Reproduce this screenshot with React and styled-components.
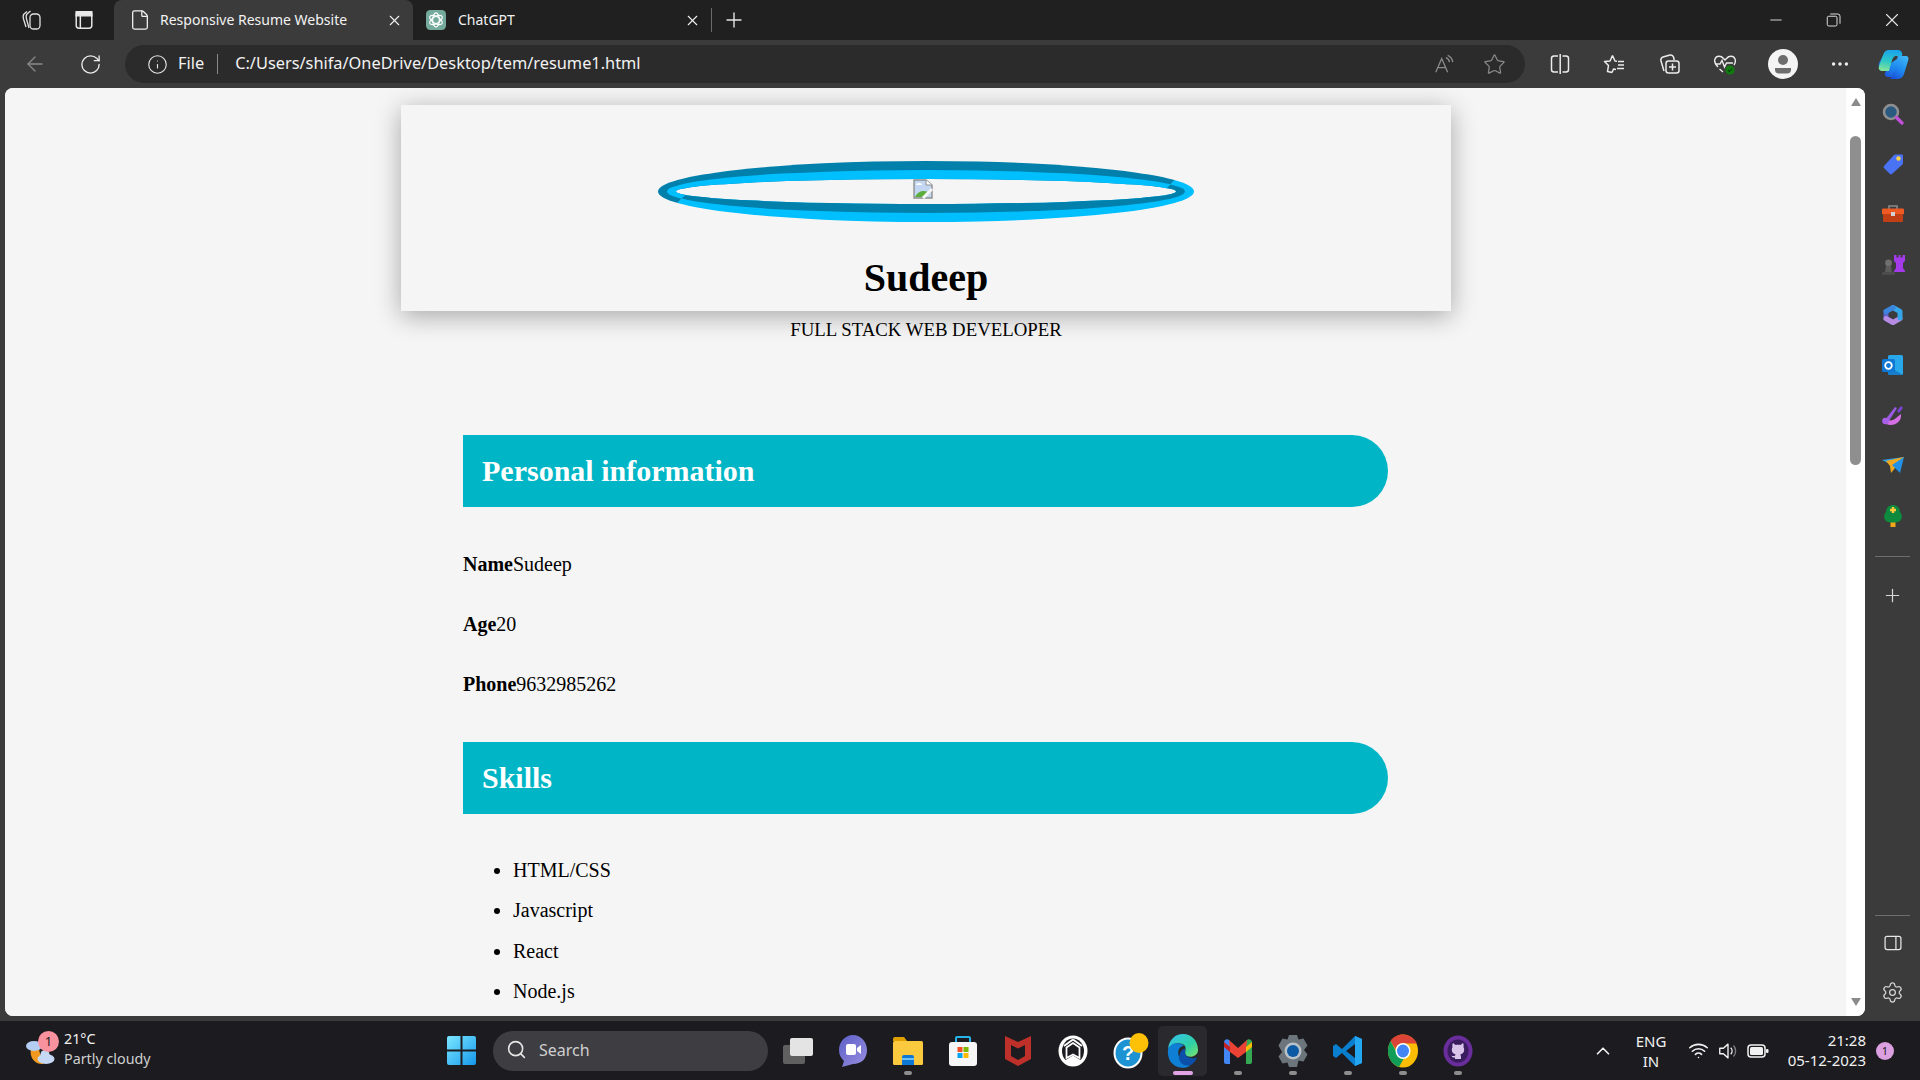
import React from 'react'
import styled, { createGlobalStyle } from 'styled-components'
import {
  ArrowLeft, RotateCw, Info, File, X, Plus, Star, Minus, Search, ChevronUp, Wifi, Settings, Ellipsis,
} from 'lucide-react'

const GlobalStyle = createGlobalStyle`
  html, body {
    margin: 0;
    width: 1920px;
    height: 1080px;
    overflow: hidden;
    background: #202020;
  }
`

const UI_FONT = `"Noto Sans", "Open Sans", sans-serif`
const PAGE_FONT = `"Liberation Serif", "Times New Roman", serif`

const Screen = styled.div`
  width: 1920px;
  height: 1080px;
  display: flex;
  flex-direction: column;
  font-family: ${UI_FONT};
  color: #fff;
`

/* ---- tab strip ---- */
const TabStrip = styled.div`
  height: 40px;
  flex: none;
  display: flex;
  align-items: stretch;
  background: #202020;
`
const StripButton = styled.div`
  width: ${p => p.$w || 52}px;
  flex: none;
  display: flex;
  align-items: center;
  justify-content: center;
  color: #e6e6e6;
`
const Tab = styled.div`
  width: ${p => p.$w}px;
  flex: none;
  display: flex;
  align-items: center;
  padding: 0 10px 0 ${p => p.$active ? 15 : 13}px;
  box-sizing: border-box;
  margin-left: ${p => p.$active ? 4 : 0}px;
  background: ${p => p.$active ? '#3b3b3b' : 'transparent'};
  border-radius: ${p => p.$active ? '8px 8px 0 0' : '0'};
  font-size: 14px;
  color: #f2f2f2;
`
const TabTitle = styled.span`
  margin: -2px 0 0 ${p => p.$gap}px;
  flex: 1;
  white-space: nowrap;
`
const TabDivider = styled.div`
  width: 1px;
  height: 24px;
  align-self: center;
  background: #6a6a6a;
  flex: none;
`
const WindowControls = styled.div`
  margin-left: auto;
  display: flex;
  gap: 1px;
`

/* ---- toolbar ---- */
const Toolbar = styled.div`
  height: 48px;
  flex: none;
  display: flex;
  align-items: center;
  background: #3b3b3b;
`
const ToolButton = styled.div`
  width: ${p => p.$w || 55}px;
  flex: none;
  display: flex;
  align-items: center;
  justify-content: center;
  color: ${p => p.$dim ? '#8a8a8a' : '#ececec'};
`
const AddressBar = styled.div`
  width: 1400px;
  height: 38px;
  flex: none;
  margin-left: 15px;
  margin-right: 7px;
  display: flex;
  align-items: center;
  background: #2b2b2b;
  border-radius: 19px;
  font-size: 16.35px;
  color: #f2f2f2;
`
const AddressIcon = styled.div`
  margin-left: 22px;
  display: flex;
  color: #e6e6e6;
`
const Scheme = styled.span`
  margin: -2px 0 0 10px;
`
const AddressDivider = styled.div`
  width: 1px;
  height: 20px;
  margin: 0 17px 0 13px;
  background: #8a8a8a;
`
const Url = styled.span`
  flex: 1;
  margin-top: -2px;
  white-space: nowrap;
`
const AddressEnd = styled.div`
  display: flex;
  align-items: center;
  padding-right: 6px;
`

/* ---- main area ---- */
const Main = styled.div`
  flex: 1;
  min-height: 0;
  display: flex;
  padding-left: 5px;
  background: #3b3b3b;
`
const BrowserWindow = styled.div`
  width: 1860px;
  height: 928px;
  flex: none;
  display: flex;
  overflow: hidden;
  border-radius: 8px;
  background: #f5f5f5;
`
const Page = styled.div`
  flex: 1;
  min-width: 0;
  padding-top: 17px;
  background: #f5f5f5;
  color: #000;
  font-family: ${PAGE_FONT};
  font-size: 20px;
  line-height: 22px;
`
const HeaderCard = styled.header`
  width: 1050px;
  height: 206px;
  margin-left: 396px;
  display: flex;
  flex-direction: column;
  align-items: center;
  background: #f5f5f5;
  box-shadow: 0 5px 24px rgba(0, 0, 0, 0.32);
`
const Avatar = styled.div`
  width: 536px;
  height: 61px;
  box-sizing: border-box;
  margin-top: 56px;
  display: flex;
  align-items: center;
  justify-content: center;
  border: 18px groove #00bfff;
  border-radius: 50%;
`
const BrokenImage = styled.svg`
  width: 20px;
  height: 20px;
  flex: none;
  margin: -5px 6px 0 0;
`
const Name = styled.h1`
  margin: 33px 0 0;
  font-size: 40px;
  line-height: 46px;
  font-weight: 700;
`
const Role = styled.p`
  width: 1050px;
  margin: 8px 0 0 396px;
  text-align: center;
  font-size: 18.8px;
`
const Section = styled.section`
  width: 925px;
  margin-left: 458px;
`
const SectionBar = styled.h2`
  height: 72px;
  margin: ${p => p.$top}px 0 0;
  padding-left: 19px;
  display: flex;
  align-items: center;
  background: #00b6c6;
  border-radius: 0 36px 36px 0;
  color: #fff;
  font-size: 30px;
  font-weight: 700;
`
const InfoRow = styled.p`
  margin: ${p => p.$first ? 46 : 38}px 0 0;
`
const SkillList = styled.ul`
  margin: 45px 0 0;
  padding-left: 50px;
`
const SkillItem = styled.li`
  margin-bottom: 18.3px;
`

/* ---- scrollbar and sidebar ---- */
const ScrollTrack = styled.div`
  width: 19px;
  flex: none;
  display: flex;
  flex-direction: column;
  align-items: center;
  background: #fff;
`
const ScrollArrow = styled.div`
  width: 0;
  height: 0;
  margin: ${p => p.$up ? '10px 0 0' : 'auto 0 10px'};
  border-left: 5.5px solid transparent;
  border-right: 5.5px solid transparent;
  border-bottom: ${p => p.$up ? '8px solid #8b8b8b' : '0'};
  border-top: ${p => p.$up ? '0' : '8px solid #8b8b8b'};
`
const ScrollThumb = styled.div`
  width: 11px;
  height: 329px;
  margin-top: 30px;
  border-radius: 5.5px;
  background: #8f8f8f;
`
const Sidebar = styled.aside`
  flex: 1;
  display: flex;
  flex-direction: column;
  align-items: center;
  height: 930px;
  padding-top: 1px;
  box-sizing: border-box;
  color: #d8d8d8;
`
const SideItem = styled.div`
  height: 50.2px;
  flex: none;
  display: flex;
  align-items: center;
  justify-content: center;
`
const SideRule = styled.div`
  width: 35px;
  height: 1px;
  flex: none;
  margin: ${p => p.$bottom ? 'auto 0 2px' : '15px 0 14px'};
  background: #6e6e6e;
`

/* ---- taskbar ---- */
const Taskbar = styled.footer`
  height: 59px;
  flex: none;
  display: flex;
  align-items: center;
  background: #1c1c20;
`
const Weather = styled.div`
  width: 447px;
  flex: none;
  box-sizing: border-box;
  padding-left: 25px;
  display: flex;
  align-items: center;
  position: relative;
`
const WeatherBadge = styled.span`
  position: absolute;
  left: 38px;
  top: -2px;
  width: 21px;
  height: 21px;
  border-radius: 50%;
  background: #f9929f;
  color: #1c1c1c;
  font-size: 13px;
  line-height: 21px;
  text-align: center;
`
const WeatherText = styled.div`
  margin: -4px 0 0 9px;
  font-size: 14.3px;
  line-height: 20px;
  color: #f0f0f0;
`
const WeatherSub = styled.div`
  color: #cfcfcf;
`
const SearchBox = styled.div`
  width: 275px;
  height: 40px;
  flex: none;
  margin-left: 17px;
  margin-right: 2px;
  box-sizing: border-box;
  padding: 0 0 2px 13px;
  display: flex;
  align-items: center;
  gap: 12px;
  background: #3e3e42;
  border-radius: 20px;
  font-size: 16px;
  color: #cfcfcf;
`
const AppSlot = styled.div`
  width: ${p => p.$active ? 49 : 55}px;
  height: 50px;
  margin: 0 ${p => p.$active ? 3 : 0}px;
  flex: none;
  position: relative;
  display: flex;
  align-items: center;
  justify-content: center;
  background: ${p => p.$active ? '#2a2a2e' : 'transparent'};
  border-radius: 5px;
`
const RunDot = styled.span`
  position: absolute;
  bottom: 1px;
  left: 50%;
  width: ${p => p.$active ? 20 : 8}px;
  height: 4px;
  margin-left: ${p => p.$active ? -10 : -4}px;
  border-radius: 2px;
  background: ${p => p.$active ? '#e1a5e6' : '#8d8d8d'};
`
const Tray = styled.div`
  margin-left: auto;
  padding-right: 26px;
  display: flex;
  align-items: center;
  font-size: 15px;
  color: #f2f2f2;
`
const TrayIcon = styled.div`
  width: ${p => p.$w || 30}px;
  flex: none;
  display: flex;
  justify-content: center;
  align-items: center;
`
const Lang = styled.div`
  width: 56px;
  margin-right: 4px;
  flex: none;
  text-align: center;
  line-height: 20px;
`
const Clock = styled.div`
  width: 93px;
  margin-top: -2px;
  flex: none;
  text-align: right;
  line-height: 20px;
`
const NoticeBadge = styled.span`
  width: 18px;
  height: 18px;
  margin-left: 10px;
  border-radius: 50%;
  background: #dc9fe0;
  color: #1c1c1c;
  font-size: 11px;
  line-height: 18px;
  text-align: center;
`

/* ---- drawn icons ---- */
const Svg = ({ s = 24, children, ...rest }) => (
  <svg width={s} height={s} viewBox="0 0 24 24" fill="none" {...rest}>{children}</svg>
)

const CollectionsTabs = () => (
  <Svg s={24} stroke="#e0e0e0" strokeWidth="1.3">
    <path d="M7 3.5 L4 6 C3 7 3 9 3.5 11 L6 19" />
    <path d="M10.5 3 L7 6 C6 7 6 9 6.5 11 L9 20" />
    <rect x="10" y="6" width="10" height="15" rx="3.5" />
  </Svg>
)
const VerticalTabs = () => (
  <Svg s={22} stroke="#e8e8e8" strokeWidth="1.6">
    <rect x="3.5" y="3" width="17" height="18" rx="3" />
    <path d="M3.5 3 h17 v4.5 h-17 z" fill="#e8e8e8" />
    <path d="M8 7.5 V21" />
  </Svg>
)
const GptIcon = () => (
  <Svg s={20}>
    <rect x="0" y="0" width="24" height="24" rx="5" fill="#74aa9c" />
    <g stroke="#fff" strokeWidth="1.4">
      <ellipse cx="12" cy="12" rx="4" ry="8.500" />
      <ellipse cx="12" cy="12" rx="4" ry="8.500" transform="rotate(60 12 12)" />
      <ellipse cx="12" cy="12" rx="4" ry="8.500" transform="rotate(120 12 12)" />
    </g>
  </Svg>
)
const RestoreIcon = () => (
  <Svg s={18} stroke="#f0f0f0" strokeWidth="1.2">
    <rect x="3" y="7" width="13" height="13" rx="2" />
    <path d="M7 4 h10 a3 3 0 0 1 3 3 v10" />
  </Svg>
)
const ReadAloud = () => (
  <Svg s={22} stroke="#8c8c8c" strokeWidth="1.4">
    <path d="M3 21 L9.5 6 L16 21 M5.5 16 h8" />
    <path d="M14 5 a6 6 0 0 1 4 5 M16 2.5 a9 9 0 0 1 5.5 7.5" />
  </Svg>
)
const SplitIcon = () => (
  <Svg s={24} stroke="#ececec" strokeWidth="1.5">
    <path d="M10 4 H6 a2.5 2.5 0 0 0 -2.5 2.5 v11 A2.5 2.5 0 0 0 6 20 h4 M14.5 4 H18 a2.5 2.5 0 0 1 2.5 2.5 v11 A2.5 2.5 0 0 1 18 20 h-3.5 M12.2 2 v20" />
  </Svg>
)
const FavList = () => (
  <Svg s={24} stroke="#ececec" strokeWidth="1.5">
    <path d="M9 20.500 L10.500 17 L13 17.500 M9.500 3.500 L7 9 L1.500 9.500 L5.500 13.500 L4.500 19.500 L9 20.500 M9.500 3.500 L12 9 L14 9.200" strokeLinejoin="round" />
    <path d="M15 9.500 h6 M15 13 h6 M14 16.500 h7" />
  </Svg>
)
const CollectionsAdd = () => (
  <Svg s={24} stroke="#ececec" strokeWidth="1.5">
    <path d="M6 19 L3 9 a3 3 0 0 1 2 -4 l7 -2 a3 3 0 0 1 3.5 2 l.7 3" />
    <rect x="8" y="9" width="13" height="12" rx="2.5" fill="#3b3b3b" />
    <path d="M14.5 11.5 v7 M11 15 h7" />
  </Svg>
)
const HeartPulse = () => (
  <svg width="24" height="24" viewBox="0 0 24 24" fill="none">
    <path d="M5 15 C2 12 1 9.5 2 7 C3.5 3.5 8 3.5 10.5 6.5 L12 8 L13.5 6.5 C16 3.5 20.5 3.5 22 7 C22.8 9 22.4 11 21 13 M10 20 L6.5 17" stroke="#ececec" strokeWidth="1.4" />
    <path d="M2.5 12 H7 L9 8.5 L11.5 15 L13.5 11 H20" stroke="#ececec" strokeWidth="1.4" />
    <circle cx="17" cy="18" r="4.6" fill="#107c10" />
    <path d="M15 18 l1.5 1.5 l2.6 -2.8" stroke="#0d3d0d" strokeWidth="1.1" />
  </svg>
)
const ProfileIcon = () => (
  <svg width="30" height="30" viewBox="0 0 30 30">
    <circle cx="15" cy="15" r="15" fill="#f4f4f4" />
    <circle cx="15" cy="11" r="5" fill="#6d6d6d" />
    <path d="M7 19 h16 v1.5 a4 4 0 0 1 -4 4 h-8 a4 4 0 0 1 -4 -4 z" fill="#6d6d6d" />
  </svg>
)
const CopilotIcon = () => (
  <svg width="31" height="31" viewBox="0 0 31 31">
    <defs>
      <linearGradient id="copA" x1="0.5" y1="0" x2="0.3" y2="1">
        <stop offset="0" stopColor="#1aa3ec" />
        <stop offset="0.55" stopColor="#2fc9c4" />
        <stop offset="1" stopColor="#86e39a" />
      </linearGradient>
      <linearGradient id="copB" x1="0.2" y1="1" x2="0.8" y2="0">
        <stop offset="0" stopColor="#1a4cd8" />
        <stop offset="0.5" stopColor="#1e8cf0" />
        <stop offset="1" stopColor="#3fb6f7" />
      </linearGradient>
    </defs>
    <path d="M14 1 H22 C18 1 16.500 3 15.500 6 L13 14 L22 8 L14 28 H10 C8 28 6 26 7 24 L10 18 H4 C1 18 0 16 1 14 L6 5 C7.500 2 10 1 14 1Z" fill="url(#copB)" />
    <path d="M11 1 H20 C23 1 25 4 24 7 H18 C16 7 15 9 14 11 L11 22 H5 C1.500 22 0 20 1 17 L5.500 5 C6.500 2.500 8.500 1 11 1Z" fill="url(#copA)" />
    <path d="M20 7 H28 C30 7 31 9 30.300 11 L26 25 C25 28.500 22.500 30 19.500 30 H10 C12.500 30 14 28 15 25.500 L19 11 C19.500 9 19 8 20 7Z" fill="url(#copB)" />
  </svg>
)

/* sidebar apps */
const SideSearch = () => (
  <Svg>
    <circle cx="10" cy="10" r="7" fill="#2a5a80" stroke="#8f8f8f" strokeWidth="2.6" />
    <path d="M15.5 15.5 L21 21" stroke="#c24fd8" strokeWidth="3.4" strokeLinecap="round" />
  </Svg>
)
const SideTag = () => (
  <Svg>
    <path d="M3 14 L13 3 a2 2 0 0 1 1.5 -.6 L21 2.5 a1 1 0 0 1 1 1 V11 a2 2 0 0 1 -.6 1.4 L11 22 a1.5 1.5 0 0 1 -2 0 L3 16 a1.5 1.5 0 0 1 0 -2z" fill="#4a72f5" />
    <circle cx="17.5" cy="6.5" r="2.2" fill="#ffd24a" />
  </Svg>
)
const SideToolbox = () => (
  <Svg>
    <path d="M8 7 V4 h8 v3" stroke="#8a8a8a" strokeWidth="1.6" />
    <rect x="1" y="6.5" width="22" height="6" rx="1" fill="#ef5a24" />
    <rect x="2" y="12" width="20" height="8" rx="1" fill="#c13f14" />
    <rect x="10" y="10" width="4" height="4" fill="#d2d2d2" />
  </Svg>
)
const SideChess = () => (
  <Svg>
    <path d="M13 2 h2.500 v2.500 h2 v-2.500 h2 v2.500 h2 v-2.500 h2.500 v6 l-2 2 v5 l2 3 v1 h-11 v-1 l2 -3 v-5 l-2 -2z" fill="#a43bea" />
    <circle cx="7.5" cy="10" r="3.4" fill="#6f6f6f" />
    <path d="M5 13 h5 l1 6 h-7z" fill="#5b5b5b" />
    <rect x="1" y="19" width="13" height="3" rx="1" fill="#4c4c4c" />
  </Svg>
)
const SideM365 = () => (
  <Svg strokeLinejoin="round" strokeLinecap="round" strokeWidth="5">
    <path d="M5 8.500 L5 15.500 L12 19.500" stroke="#5a63d0" />
    <path d="M5 15.500 L12 19.500 L19 15.500" stroke="#b88be2" />
    <path d="M12 4.500 L19 8.500 L19 15" stroke="#35a6e8" />
    <path d="M5 8.500 L12 4.500" stroke="#3b86dc" />
  </Svg>
)
const SideOutlook = () => (
  <Svg>
    <rect x="7" y="2" width="15" height="20" rx="1.5" fill="#28a8ea" />
    <path d="M7 13 L22 22 H7 Z" fill="#0f6cbd" opacity="0.7" />
    <rect x="1" y="6" width="13" height="13" rx="1.5" fill="#0f78d4" />
    <circle cx="7.5" cy="12.5" r="3.3" fill="none" stroke="#fff" strokeWidth="1.8" />
  </Svg>
)
const SideBrush = () => (
  <Svg>
    <path d="M5 21 C12 24 21 20 20 11 L15 15 C13 17 10 18 7 17 Z" fill="#d56fe6" />
    <path d="M4 17 L14 4 L16 5 L8 18" fill="#9a5be0" />
    <circle cx="4.5" cy="18" r="3.3" fill="#a860e8" />
    <path d="M16 8 L20 3 L22 5 L18 10 Z" fill="#7c43d6" />
  </Svg>
)
const SidePlane = () => (
  <Svg>
    <path d="M1 7 L23 4 L11 12 Z" fill="#2fa3ea" />
    <path d="M5 8 L23 4 L10 20 L9 13 Z" fill="#f2a91e" />
    <path d="M11 12 L23 4 L19 20 L14 15 Z" fill="#2392e6" />
  </Svg>
)
const SideTree = () => (
  <Svg>
    <rect x="9.5" y="17" width="5" height="6" fill="#f0a818" />
    <path d="M12 1 C7 1 5 5 5 8 C2.5 10 2.5 15 5 17 C8 19 16 19 19 17 C21.5 15 21.5 10 19 8 C19 5 17 1 12 1Z" fill="#0e8a3e" />
    <path d="M12 3 v6 M9 6 h6" stroke="#ffc83d" strokeWidth="2.4" />
  </Svg>
)
const PanelIcon = () => (
  <Svg s={20} stroke="#e6e6e6" strokeWidth="1.5">
    <rect x="2.5" y="4" width="19" height="16" rx="2.5" />
    <path d="M15.5 4 V20" />
  </Svg>
)

/* taskbar apps */
const WeatherIcon = () => (
  <svg width="30" height="34" viewBox="0 0 30 34">
    <path d="M6 14 C4 24 10 30 17 30 C23 30 14 22 14 14 Z" fill="#f29a1f" />
    <ellipse cx="9" cy="12" rx="8" ry="5" fill="#b4cdf2" />
    <ellipse cx="21" cy="25" rx="8.500" ry="5" fill="#c5d9f6" />
    <circle cx="20" cy="20.500" r="4.500" fill="#c5d9f6" />
  </svg>
)
const WinLogo = () => (
  <svg width="29" height="29" viewBox="0 0 29 29">
    <defs>
      <linearGradient id="winA" x1="0" y1="0" x2="1" y2="1">
        <stop offset="0" stopColor="#7ce8ff" />
        <stop offset="1" stopColor="#1597ec" />
      </linearGradient>
    </defs>
    <path d="M0 2 a2 2 0 0 1 2 -2 h11.5 v13.5 h-13.5z M15.5 0 h11.5 a2 2 0 0 1 2 2 v11.5 h-13.5z M0 15.5 h13.5 v13.5 h-11.5 a2 2 0 0 1 -2 -2z M15.5 15.5 h13.5 v11.5 a2 2 0 0 1 -2 2 h-11.5z" fill="url(#winA)" />
  </svg>
)
const TaskView = () => (
  <svg width="32" height="30" viewBox="0 0 32 30">
    <rect x="1" y="9" width="22" height="19" rx="2" fill="#606060" />
    <rect x="8" y="2" width="23" height="18" rx="2" fill="#e4e4e4" />
  </svg>
)
const ChatApp = () => (
  <svg width="30" height="34" viewBox="0 0 30 34">
    <defs>
      <linearGradient id="chatA" x1="0" y1="0" x2="1" y2="1">
        <stop offset="0" stopColor="#5b5fc7" />
        <stop offset="1" stopColor="#9a8fe0" />
      </linearGradient>
    </defs>
    <path d="M15 1 C23 1 29 8 29 16 C29 25 23 30 15 30 L4 33 L6 27 C3 24 1 21 1 16 C1 8 7 1 15 1Z" fill="url(#chatA)" />
    <rect x="8" y="10" width="10" height="11" rx="2" fill="#fff" />
    <path d="M19 14 L23 11 V20 L19 17Z" fill="#fff" />
  </svg>
)
const Explorer = () => (
  <svg width="32" height="30" viewBox="0 0 32 30">
    <path d="M1 3 a2 2 0 0 1 2 -2 h9 l3 4 h-14z" fill="#e0a100" />
    <rect x="1" y="5" width="30" height="24" rx="1.5" fill="#fbc93d" />
    <path d="M10 21 a2 2 0 0 1 2 -2 h8 a2 2 0 0 1 2 2 v8 h-12z" fill="#0f78d4" />
    <rect x="10" y="22" width="12" height="2" fill="#6ec0f5" />
  </svg>
)
const StoreApp = () => (
  <svg width="30" height="32" viewBox="0 0 30 32">
    <path d="M8 8 V3 a1 1 0 0 1 1 -1 h12 a1 1 0 0 1 1 1 v5" fill="none" stroke="#25b3e8" strokeWidth="2" />
    <rect x="1" y="7" width="28" height="24" rx="3" fill="#f6f6f6" />
    <rect x="9.5" y="12" width="5" height="5" fill="#f25022" />
    <rect x="15.5" y="12" width="5" height="5" fill="#7fba00" />
    <rect x="9.5" y="18" width="5" height="5" fill="#00a4ef" />
    <rect x="15.5" y="18" width="5" height="5" fill="#ffb900" />
  </svg>
)
const McAfee = () => (
  <svg width="28" height="32" viewBox="0 0 28 32">
    <path d="M1 1 L14 7 L27 1 V24 L14 31 L1 24 Z M7 10 V21 L14 25 L21 21 V10 L14 13.5 Z" fill="#c0302a" fillRule="evenodd" />
  </svg>
)
const CircleApp = () => (
  <svg width="30" height="32" viewBox="0 0 30 32">
    <ellipse cx="15" cy="16" rx="14.500" ry="15.500" fill="#fff" />
    <ellipse cx="15" cy="16" rx="11" ry="12.500" fill="#1c1c20" />
    <path d="M15 4.500 L24 11 M15 4.500 L6 11" stroke="#fff" strokeWidth="2" />
    <path d="M8.500 23 V12.500 L15 8 L21.500 12.500 V23 L15 19.500 Z" fill="none" stroke="#fff" strokeWidth="1.800" />
    <path d="M6 26 L15 20.500 L24 26 L15 31Z" fill="#fff" />
  </svg>
)
const HelpApp = () => (
  <svg width="42" height="36" viewBox="-6 0 42 36">
    <ellipse cx="15" cy="20" rx="14.500" ry="15.500" fill="#fff" />
    <ellipse cx="15" cy="20" rx="12.500" ry="13.500" fill="#1d93d3" />
    <text x="15" y="27" textAnchor="middle" fontFamily="Liberation Sans, sans-serif" fontWeight="700" fontSize="20" fill="#fff">?</text>
    <ellipse cx="26" cy="10" rx="9.500" ry="10" fill="#ffc107" />
  </svg>
)
const EdgeApp = () => (
  <svg width="32" height="36" viewBox="0 0 32 36">
    <defs>
      <linearGradient id="edgeA" x1="0" y1="0" x2="1" y2="1">
        <stop offset="0" stopColor="#35c1f1" />
        <stop offset="0.6" stopColor="#2fd0a5" />
        <stop offset="1" stopColor="#7de36b" />
      </linearGradient>
    </defs>
    <path d="M16 1 C25 1 31 8 31 17 C31 23 24 25 20 23 C16 21 20 17 18 13 C15 9 5 9 1 16 C2 7 8 1 16 1Z" fill="url(#edgeA)" />
    <path d="M1 16 C4 9 14 9 17 13 C12 13 10 18 12 24 C14 30 20 33 24 32 C20 35 15 35.5 11 34 C4 32 0 25 1 16Z" fill="#0f7fd6" />
    <path d="M12 24 C13 19 16 15 18 16 C18 20 18 23 22 24.5 C26 26 29 25 30 24 C28 30 24 33 20 32.5 C15 32 12 29 12 24Z" fill="#0b4fa8" />
  </svg>
)
const GmailApp = () => (
  <svg width="28" height="26" viewBox="0 0 28 26">
    <path d="M0 4 a3 3 0 0 1 5 -2 L6 3 V26 H2 a2 2 0 0 1 -2 -2z" fill="#4285f4" />
    <path d="M22 3 l1 -1 a3 3 0 0 1 5 2 V24 a2 2 0 0 1 -2 2 h-4z" fill="#34a853" />
    <path d="M5 2 L14 10 L23 2 L22 14 L14 20 L6 14 Z" fill="#ea4335" />
    <path d="M0 4 L6 9 V14 L0 9Z" fill="#c5221f" />
    <path d="M28 4 L22 9 V14 L28 9Z" fill="#fbbc04" />
  </svg>
)
const SettingsApp = () => (
  <svg width="32" height="34" viewBox="0 0 32 34">
    <path d="M12 1 h8 l1.5 4.5 5 -1 4 7 -3.5 4.5 3.5 4.500 -4 7 -5 -1 L20 33 h-8 l-1.500 -4.500 -5 1 -4 -7 L5 18 1.500 11.500 l4 -7 5 1z" fill="#6d757c" />
    <circle cx="16" cy="17" r="8.5" fill="#b9c2c9" />
    <circle cx="16" cy="17" r="6" fill="#0c59a4" />
  </svg>
)
const VsCode = () => (
  <svg width="30" height="32" viewBox="0 0 30 32">
    <path d="M22 1 L29 4 V28 L22 31 L9 18 L3 23 L0 21 V11 L3 9 L9 14Z M22 9 L13 16 L22 23Z" fill="#0a7fd0" fillRule="evenodd" />
    <path d="M22 1 L29 4 V28 L22 31Z" fill="#22a7f0" />
  </svg>
)
const ChromeApp = () => (
  <svg width="30" height="34" viewBox="0 0 30 34">
    <ellipse cx="15" cy="17" rx="15" ry="16.500" fill="#fbbc04" />
    <path d="M15 .5 C21 .5 26.500 4 29 9.500 H15 C11 9.500 8 12 7.500 15 L2.500 7 C5 3 10 .5 15 .5Z" fill="#db4437" />
    <path d="M2.500 7 L9 19 C10.500 22 13 24 16 24 L11 33 C5 31 0 25 0 17 C0 13 1 10 2.500 7Z" fill="#0f9d58" />
    <ellipse cx="15" cy="17" rx="7.500" ry="8" fill="#fff" />
    <ellipse cx="15" cy="17" rx="6" ry="6.500" fill="#4285f4" />
  </svg>
)
const GithubApp = () => (
  <svg width="30" height="32" viewBox="0 0 30 32">
    <ellipse cx="15" cy="16" rx="14.500" ry="15.500" fill="#6a2d9c" />
    <ellipse cx="15" cy="16" rx="10.500" ry="11.500" fill="#3a1d5e" />
    <path d="M10 8 L12.500 10 C14 9.700 16 9.700 17.500 10 L20 8 C20.800 9.500 20.800 11 20.400 12 C21.500 13.500 21.500 16.500 20 18 C19.200 18.800 18 19.400 17.200 19.600 C18 20.400 18 21.500 18 24 H12 V22.500 C10 22.900 8.800 22 8.400 20.500 C9.200 20.900 10.400 21.500 12 20.800 C12 20.400 12.400 20 12.800 19.600 C12 19.400 10.800 18.800 10 18 C8.500 16.500 8.500 13.500 9.600 12 C9.200 11 9.200 9.500 10 8Z" fill="#d9c4ea" />
  </svg>
)
const VolumeIcon = () => (
  <Svg s={22} stroke="#f2f2f2" strokeWidth="1.5">
    <path d="M3 9 h4 l5 -4.500 v15 L7 15 H3z" strokeLinejoin="round" />
    <path d="M15 8.500 a5 5 0 0 1 0 7" />
    <path d="M18 6 a9 9 0 0 1 0 12" stroke="#7d7d7d" />
  </Svg>
)
const BatteryIcon = () => (
  <svg width="22" height="14" viewBox="0 0 22 14" fill="none">
    <rect x="1" y="1" width="17" height="12" rx="3" stroke="#f2f2f2" strokeWidth="1.500" />
    <rect x="3" y="3" width="13" height="8" rx="1.500" fill="#f2f2f2" />
    <rect x="19" y="5" width="2.500" height="4" rx="1" fill="#f2f2f2" />
  </svg>
)

const sideApps = [SideSearch, SideTag, SideToolbox, SideChess, SideM365, SideOutlook, SideBrush, SidePlane, SideTree]

const taskApps = [
  { Icon: TaskView },
  { Icon: ChatApp },
  { Icon: Explorer, running: true },
  { Icon: StoreApp },
  { Icon: McAfee },
  { Icon: CircleApp },
  { Icon: HelpApp },
  { Icon: EdgeApp, running: true, active: true },
  { Icon: GmailApp, running: true },
  { Icon: SettingsApp, running: true },
  { Icon: VsCode, running: true },
  { Icon: ChromeApp, running: true },
  { Icon: GithubApp, running: true },
]

const personal = [
  ['Name', 'Sudeep'],
  ['Age', '20'],
  ['Phone', '9632985262'],
]

const skills = ['HTML/CSS', 'Javascript', 'React', 'Node.js']

export default function App() {
  return (
    <Screen>
      <GlobalStyle />
      <TabStrip>
        <StripButton $w={6} />
        <StripButton><CollectionsTabs /></StripButton>
        <StripButton><VerticalTabs /></StripButton>
        <Tab $active $w={299}>
          <File size={22} strokeWidth={1.4} color="#f0f0f0" />
          <TabTitle $gap={9}>Responsive Resume Website</TabTitle>
          <X size={17} strokeWidth={1.5} />
        </Tab>
        <Tab $w={298}>
          <GptIcon />
          <TabTitle $gap={12}>ChatGPT</TabTitle>
          <X size={17} strokeWidth={1.5} />
        </Tab>
        <TabDivider />
        <StripButton $w={44}><Plus size={24} strokeWidth={1.4} /></StripButton>
        <WindowControls>
          <StripButton $w={57}><Minus size={18} strokeWidth={1.2} /></StripButton>
          <StripButton $w={57}><RestoreIcon /></StripButton>
          <StripButton $w={57}><X size={22} strokeWidth={1.2} /></StripButton>
        </WindowControls>
      </TabStrip>

      <Toolbar>
        <ToolButton $w={70} $dim><ArrowLeft size={24} strokeWidth={1.3} /></ToolButton>
        <ToolButton $w={40}><RotateCw size={23} strokeWidth={1.4} /></ToolButton>
        <AddressBar>
          <AddressIcon><Info size={21} strokeWidth={1.3} /></AddressIcon>
          <Scheme>File</Scheme>
          <AddressDivider />
          <Url>C:/Users/shifa/OneDrive/Desktop/tem/resume1.html</Url>
          <AddressEnd>
            <ToolButton $w={50}><ReadAloud /></ToolButton>
            <ToolButton $w={50} $dim><Star size={23} strokeWidth={1.3} /></ToolButton>
          </AddressEnd>
        </AddressBar>
        <ToolButton><SplitIcon /></ToolButton>
        <ToolButton><FavList /></ToolButton>
        <ToolButton><CollectionsAdd /></ToolButton>
        <ToolButton><HeartPulse /></ToolButton>
        <ToolButton $w={62}><ProfileIcon /></ToolButton>
        <ToolButton $w={52}><Ellipsis size={22} strokeWidth={1.8} /></ToolButton>
        <ToolButton $w={54}><CopilotIcon /></ToolButton>
      </Toolbar>

      <Main>
        <BrowserWindow>
          <Page>
            <HeaderCard>
              <Avatar>
                <BrokenImage viewBox="0 0 20 20">
                  <path d="M1 1 H13 L19 6 V19 H1 Z" fill="#c3d7f2" stroke="#8f8f8f" strokeWidth="1.4" />
                  <path d="M13 1 V6 H19" fill="#fff" stroke="#8f8f8f" strokeWidth="1" />
                  <path d="M3 6 a3 2 0 0 1 6 0 z" fill="#fff" />
                  <path d="M2 18 C5 12 10 11 15 13 L11 18 Z" fill="#5cae3c" />
                  <path d="M10 19 L19 10" stroke="#f5f5f5" strokeWidth="3" />
                </BrokenImage>
              </Avatar>
              <Name>Sudeep</Name>
            </HeaderCard>
            <Role>FULL STACK WEB DEVELOPER</Role>
            <Section>
              <SectionBar $top={94}>Personal information</SectionBar>
              {personal.map(([label, value], i) => (
                <InfoRow key={label} $first={i === 0}><b>{label}</b>{value}</InfoRow>
              ))}
              <SectionBar $top={47}>Skills</SectionBar>
              <SkillList>
                {skills.map(skill => <SkillItem key={skill}>{skill}</SkillItem>)}
              </SkillList>
            </Section>
          </Page>
          <ScrollTrack>
            <ScrollArrow $up />
            <ScrollThumb />
            <ScrollArrow />
          </ScrollTrack>
        </BrowserWindow>
        <Sidebar>
          {sideApps.map((Icon, i) => <SideItem key={i}><Icon /></SideItem>)}
          <SideRule />
          <SideItem><Plus size={21} strokeWidth={1.4} /></SideItem>
          <SideRule $bottom />
          <SideItem><PanelIcon /></SideItem>
          <SideItem><Settings size={23} strokeWidth={1.3} /></SideItem>
        </Sidebar>
      </Main>

      <Taskbar>
        <Weather>
          <WeatherIcon />
          <WeatherBadge>1</WeatherBadge>
          <WeatherText>
            21°C
            <WeatherSub>Partly cloudy</WeatherSub>
          </WeatherText>
        </Weather>
        <WinLogo />
        <SearchBox>
          <Search size={21} strokeWidth={1.8} color="#e6e6e6" />
          Search
        </SearchBox>
        {taskApps.map(({ Icon, running, active }, i) => (
          <AppSlot key={i} $active={active}>
            <Icon />
            {running && <RunDot $active={active} />}
          </AppSlot>
        ))}
        <Tray>
          <TrayIcon $w={40}><ChevronUp size={22} strokeWidth={1.8} /></TrayIcon>
          <Lang>ENG<br />IN</Lang>
          <TrayIcon><Wifi size={21} strokeWidth={1.8} /></TrayIcon>
          <TrayIcon><VolumeIcon /></TrayIcon>
          <TrayIcon><BatteryIcon /></TrayIcon>
          <Clock>21:28<br />05-12-2023</Clock>
          <NoticeBadge>1</NoticeBadge>
        </Tray>
      </Taskbar>
    </Screen>
  )
}
